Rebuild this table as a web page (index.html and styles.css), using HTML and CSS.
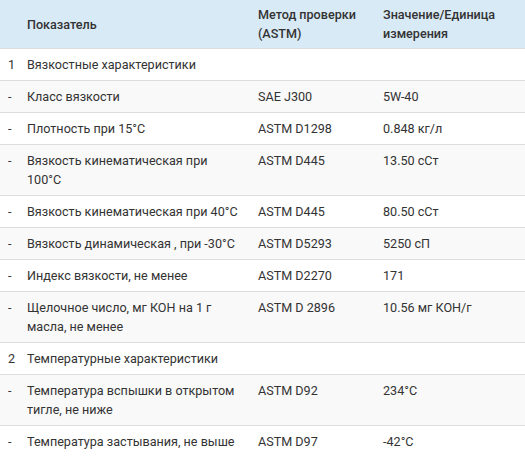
FILE: index.html
```html
<!DOCTYPE html>
<html lang="ru">
<head>
<meta charset="utf-8">
<link rel="stylesheet" href="styles.css">
</head>
<body>
<table class="spec">
  <colgroup>
    <col class="c-num">
    <col class="c-name">
    <col class="c-method">
    <col class="c-value">
  </colgroup>
  <thead>
    <tr>
      <th></th>
      <th>Показатель</th>
      <th>Метод проверки (ASTM)</th>
      <th>Значение/Единица измерения</th>
    </tr>
  </thead>
  <tbody>
    <tr><td>1</td><td>Вязкостные характеристики</td><td></td><td></td></tr>
    <tr><td>-</td><td>Класс вязкости</td><td>SAE J300</td><td>5W-40</td></tr>
    <tr><td>-</td><td>Плотность при 15°C</td><td>ASTM D1298</td><td>0.848 кг/л</td></tr>
    <tr><td>-</td><td>Вязкость кинематическая при 100°C</td><td>ASTM D445</td><td>13.50 сСт</td></tr>
    <tr><td>-</td><td>Вязкость кинематическая при 40°C</td><td>ASTM D445</td><td>80.50 сСт</td></tr>
    <tr><td>-</td><td>Вязкость динамическая , при -30°C</td><td>ASTM D5293</td><td>5250 сП</td></tr>
    <tr><td>-</td><td>Индекс вязкости, не менее</td><td>ASTM D2270</td><td>171</td></tr>
    <tr><td>-</td><td>Щелочное число, мг КОН на 1 г масла, не менее</td><td>ASTM D 2896</td><td>10.56 мг КОН/г</td></tr>
    <tr><td>2</td><td>Температурные характеристики</td><td></td><td></td></tr>
    <tr><td>-</td><td>Температура вспышки в открытом тигле, не ниже</td><td>ASTM D92</td><td>234°C</td></tr>
    <tr><td>-</td><td>Температура застывания, не выше</td><td>ASTM D97</td><td>-42°C</td></tr>
  </tbody>
</table>
</body>
</html>
```

FILE: styles.css
```css
html, body {
  margin: 0;
  padding: 0;
  background: #fff;
}
body {
  font-family: Roboto, "Liberation Sans", Arial, sans-serif;
  font-size: 12.6px;
  line-height: 19px;
  color: #333;
}
.spec {
  width: 525px;
  border-collapse: collapse;
  table-layout: fixed;
}
.c-num { width: 19px; }
.c-name { width: 231px; }
.c-method { width: 125px; }
.c-value { width: 150px; }
.spec th,
.spec td {
  padding: 6px 8px 6px 8px;
  text-align: left;
  vertical-align: top;
  border-top: 1px solid #dddddd;
}
.spec th:first-child,
.spec td:first-child {
  padding-right: 0;
}
.spec thead th {
  background: #d9eaf7;
  font-weight: 500;
  border-top: 0;
  padding-top: 5px;
  padding-bottom: 5px;
  vertical-align: middle;
}
.spec tbody tr:nth-child(even) td {
  background: #f9f9f9;
}
```
